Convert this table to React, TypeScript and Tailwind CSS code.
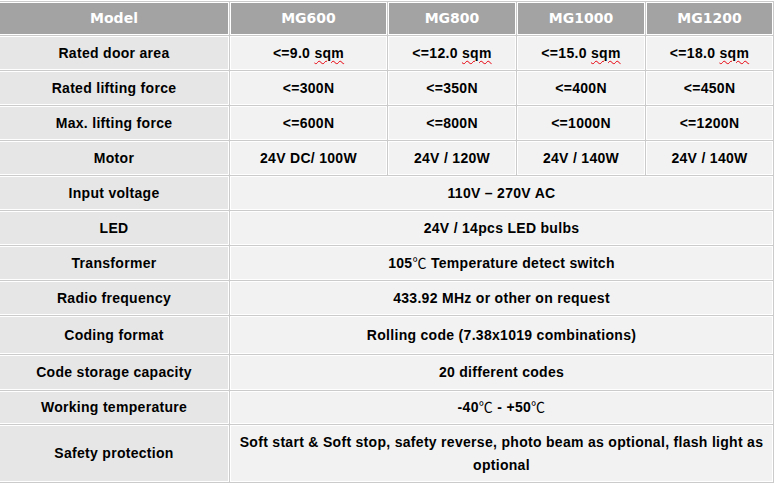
import React from "react";

const MODELS = ["MG600", "MG800", "MG1000", "MG1200"];

const Sqm = ({ v }: { v: string }) => (
  <span>
    {v}{" "}
    <span className="underline decoration-wavy decoration-red-600 decoration-1 underline-offset-2">sqm</span>
  </span>
);

type Row = { label: string; values?: React.ReactNode[]; merged?: React.ReactNode };

const ROWS: Row[] = [
  {
    label: "Rated door area",
    values: [<Sqm v="<=9.0" />, <Sqm v="<=12.0" />, <Sqm v="<=15.0" />, <Sqm v="<=18.0" />],
  },
  { label: "Rated lifting force", values: ["<=300N", "<=350N", "<=400N", "<=450N"] },
  { label: "Max. lifting force", values: ["<=600N", "<=800N", "<=1000N", "<=1200N"] },
  { label: "Motor", values: ["24V DC/ 100W", "24V / 120W", "24V / 140W", "24V / 140W"] },
  { label: "Input voltage", merged: "110V – 270V AC" },
  { label: "LED", merged: "24V / 14pcs LED bulbs" },
  {
    label: "Transformer",
    merged: (
      <span>
        105<span className="font-normal">℃</span> Temperature detect switch
      </span>
    ),
  },
  { label: "Radio frequency", merged: "433.92 MHz or other on request" },
  { label: "Coding format", merged: "Rolling code (7.38x1019 combinations)" },
  { label: "Code storage capacity", merged: "20 different codes" },
  {
    label: "Working temperature",
    merged: (
      <span>
        -40<span className="font-normal">℃</span> - +50<span className="font-normal">℃</span>
      </span>
    ),
  },
  {
    label: "Safety protection",
    merged: (
      <span className="leading-[23px]">
        Soft start &amp; Soft stop, safety reverse, photo beam as optional, flash light as
        <br />
        optional
      </span>
    ),
  },
];

const Cell = ({
  children,
  first,
  className = "",
  inner,
}: {
  children: React.ReactNode;
  first?: boolean;
  className?: string;
  inner: string;
}) => (
  <div className={`bg-white ${first ? "py-px pr-px" : "p-px"} ${className}`}>
    <div className={`flex h-full items-center justify-center text-center ${inner}`}>{children}</div>
  </div>
);

export default function App() {
  return (
    <div
      className="w-[774px] h-[485px] bg-white pt-px text-[14px] font-bold tracking-[0.3px] text-black"
      style={{ fontFamily: '"Liberation Sans", Arial, "Noto Sans CJK SC", sans-serif' }}
    >
      <div className="grid grid-cols-[229px_157px_128px_128px_127px] grid-rows-[33px_repeat(8,34px)_38px_35px_33px_57px] gap-px bg-[#cbcbcb] py-px">
        <Cell first inner="bg-[#a3a3a3] text-white tracking-normal font-['DejaVu_Sans',sans-serif]">
          Model
        </Cell>
        {MODELS.map((m) => (
          <Cell key={m} inner="bg-[#a3a3a3] text-white tracking-normal font-['DejaVu_Sans',sans-serif]">
            {m}
          </Cell>
        ))}

        {ROWS.map((row) => (
          <React.Fragment key={row.label}>
            <Cell first inner="bg-[#e6e6e6]">
              {row.label}
            </Cell>
            {row.values ? (
              row.values.map((v, i) => (
                <Cell key={i} inner="bg-[#f2f2f2]">
                  {v}
                </Cell>
              ))
            ) : (
              <Cell className="col-span-4" inner="bg-[#f2f2f2]">
                {row.merged}
              </Cell>
            )}
          </React.Fragment>
        ))}
      </div>
    </div>
  );
}
